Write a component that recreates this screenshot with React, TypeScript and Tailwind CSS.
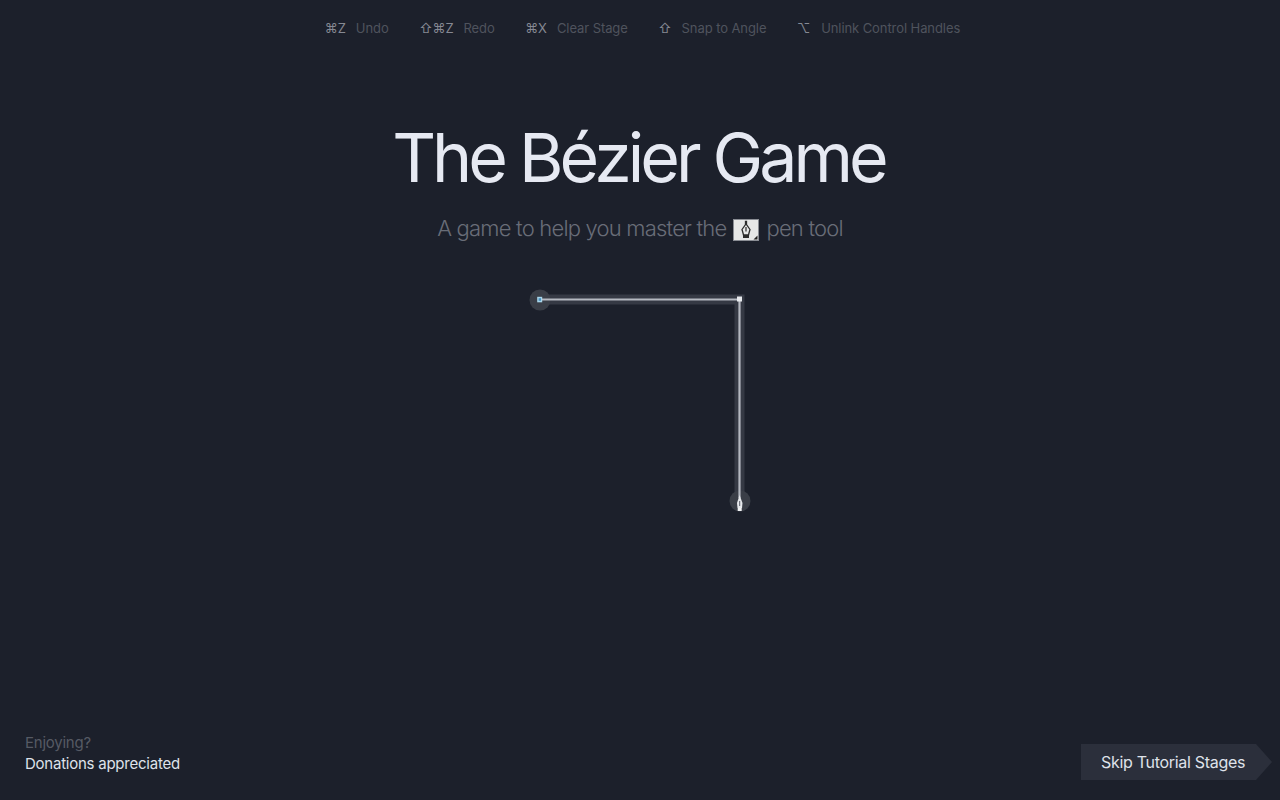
import React from "react";

const shortcuts: { keys: string; label: string; gap: string }[] = [
  { keys: "⌘Z", label: "Undo", gap: "gap-[10px]" },
  { keys: "⇧⌘Z", label: "Redo", gap: "gap-[10px]" },
  { keys: "⌘X", label: "Clear Stage", gap: "gap-[10px]" },
  { keys: "⇧", label: "Snap to Angle", gap: "gap-[10px]" },
  { keys: "⌥", label: "Unlink Control Handles", gap: "gap-[11px]" },
];

function PenIcon() {
  return (
    <svg width="26" height="22" viewBox="0 0 26 22" className="mx-[7px] inline-block align-[-5px]">
      <rect x="0.5" y="0.5" width="25" height="21" fill="#e6e7e7" stroke="#8a8d94" />
      <path d="M12.5 2.5 L12.5 5.5 L9 10.5 L10 14 L10.5 16 L15.5 16 L16 14 L17 10.5 L13.5 5.5 L13.5 2.5 Z" fill="none" stroke="#2c2c2c" strokeWidth="1.3" />
      <path d="M13 8 V12.5" stroke="#2c2c2c" strokeWidth="1.2" />
      <rect x="10" y="16" width="6" height="3" fill="#2c2c2c" />
      <path d="M24.5 16.5 L24.5 20.5 L20.5 20.5 Z" fill="#222" />
    </svg>
  );
}

function Stage() {
  return (
    <svg width="240" height="240" viewBox="0 0 240 240" className="block">
      <path d="M20 19.5 H219.5 V221" fill="none" stroke="#353944" strokeWidth="10" />
      <circle cx="20" cy="20" r="10.5" fill="#3a3e47" />
      <circle cx="220" cy="221" r="10.5" fill="#3a3e47" />
      <path d="M20 19.5 H219.5 V218" fill="none" stroke="#b4b8c0" strokeWidth="2.2" />
      <rect x="17.2" y="16.8" width="5" height="5.5" fill="#a9d6ea" />
      <rect x="18.6" y="18.2" width="2.4" height="2.6" fill="#4a90c0" />
      <rect x="217" y="16.5" width="5" height="5" fill="#e8eaee" />
      <path d="M219.6 215 L217 223 L217.5 228 L222 228 L222.5 223 Z" fill="#e6e8ec" />
      <path d="M219.7 221 V226" stroke="#5a5e68" strokeWidth="1" />
      <rect x="217.7" y="228" width="4" height="3" fill="#f2f3f5" />
    </svg>
  );
}

export default function App() {
  return (
    <div className="flex h-screen w-full flex-col overflow-hidden bg-[#1c202b] font-['Inter',sans-serif]">
      <nav className="ml-[5px] flex h-[57px] items-center justify-center gap-[30.5px] text-[13px] leading-none tracking-[-0.08px]">
        {shortcuts.map((s) => (
          <div key={s.label} className={`flex items-center ${s.gap}`}>
            <span className="text-[#868993]">{s.keys}</span>
            <span className="text-[#4f535d]">{s.label}</span>
          </div>
        ))}
      </nav>
      <main className="flex flex-1 flex-col items-center">
        <h1 className="mt-[60px] mr-[3px] text-[68px] leading-[80px] font-[380] tracking-[-4px] text-[#e6e9f2]">
          The Bézier Game
        </h1>
        <p className="mt-[16px] text-[22px] leading-[30px] font-[350] tracking-[-0.8px] text-[#696d78]">
          A game to help you master the<PenIcon />pen tool
        </p>
        <div className="mt-[37px]">
          <Stage />
        </div>
      </main>
      <footer className="mb-[20px] flex items-end justify-between pr-[8px] pl-[25px]">
        <div className="pb-[6px] text-[15px] leading-[21px] tracking-[-0.24px]">
          <div className="text-[#565a64]">Enjoying?</div>
          <div className="text-[#dfe2ea]">Donations appreciated</div>
        </div>
        <button className="h-[36px] w-[191px] bg-[#2b2f3b] pl-[20px] text-left text-[16px] tracking-[-0.3px] text-[#dfe2ea] [clip-path:polygon(0_0,175px_0,100%_50%,175px_100%,0_100%)]">
          Skip Tutorial Stages
        </button>
      </footer>
    </div>
  );
}
